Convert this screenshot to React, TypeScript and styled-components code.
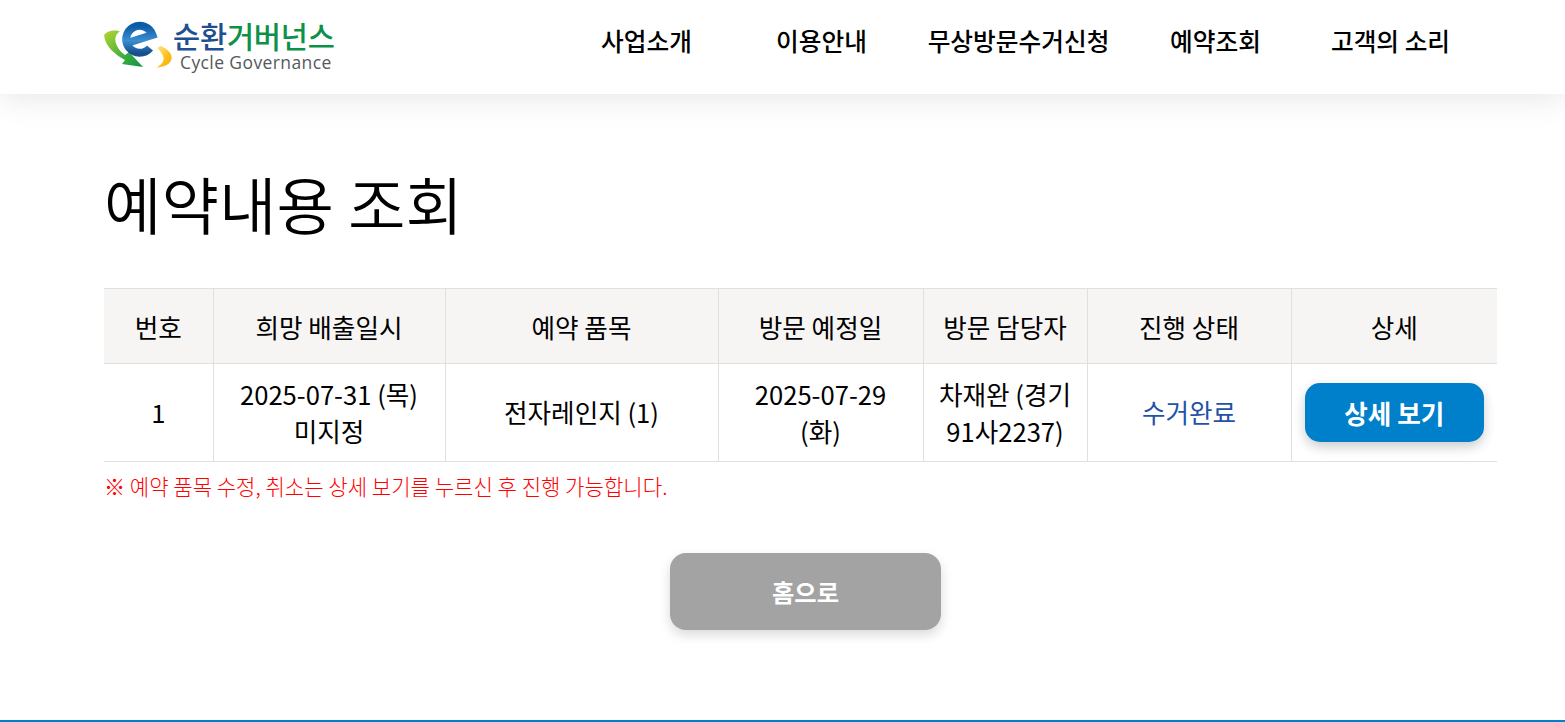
import styled, {createGlobalStyle} from "styled-components";

const navItems = ["사업소개", "이용안내", "무상방문수거신청", "예약조회", "고객의 소리"];

const columns = [109, 232, 273, 205, 164, 204, 206];
const headers = ["번호", "희망 배출일시", "예약 품목", "방문 예정일", "방문 담당자", "진행 상태", "상세"];

function LogoMark() {
    return (
        <svg width="69" height="50" viewBox="0 0 69 50" aria-hidden="true">
            <defs>
                <linearGradient id="eBlue" x1="0" y1="0" x2="0" y2="1">
                    <stop offset="0" stopColor="#0d5aa6"/>
                    <stop offset="0.55" stopColor="#3a8fd0"/>
                    <stop offset="1" stopColor="#174f90"/>
                </linearGradient>
                <linearGradient id="arrowGreen" x1="0" y1="0" x2="1" y2="1">
                    <stop offset="0" stopColor="#b9d630"/>
                    <stop offset="0.6" stopColor="#3fae3f"/>
                    <stop offset="1" stopColor="#0b9446"/>
                </linearGradient>
                <linearGradient id="arcYellow" x1="0" y1="0" x2="1" y2="1">
                    <stop offset="0" stopColor="#fbe88f"/>
                    <stop offset="0.6" stopColor="#fcbf1a"/>
                    <stop offset="1" stopColor="#f9a90f"/>
                </linearGradient>
            </defs>
            <path d="M0 15C2 12 6 10.5 10 10.5C13 10.5 15 11 16 11.5C11 14 10 20 13 26C15 30 18 33 21 35L25 32L39 47L18 44L21 40C12 35 1 27 0 15Z" fill="url(#arrowGreen)"/>
            <path d="M53.3 28L56.7 25.7C63 29 68 33 67.7 38C67 44 60 47.5 52.5 47.5C57 45 60 42 59.5 38C59 34 56 31 53.3 28Z" fill="url(#arcYellow)"/>
            <path d="M23 23L48.5 15A13.5 13.5 0 1 0 46 28" fill="none" stroke="url(#eBlue)" strokeWidth="8"/>
        </svg>
    );
}

export default function App() {
    return (
        <>
            <GlobalStyle/>
            <Header>
                <Logo>
                    <LogoMark/>
                    <LogoText>
                        <LogoName><b>순환</b>거버넌스</LogoName>
                        <LogoSub>Cycle Governance</LogoSub>
                    </LogoText>
                </Logo>
                <Nav>
                    {navItems.map(item => (
                        <NavItem key={item}>{item}</NavItem>
                    ))}
                </Nav>
            </Header>
            <Main>
                <Title>예약내용 조회</Title>
                <Table>
                    <colgroup>
                        {columns.map((width, index) => (
                            <col key={index} width={width}/>
                        ))}
                    </colgroup>
                    <thead>
                    <tr>
                        {headers.map(header => (
                            <HeadCell key={header}>{header}</HeadCell>
                        ))}
                    </tr>
                    </thead>
                    <tbody>
                    <tr>
                        <Cell>1</Cell>
                        <Cell>2025-07-31 (목)<br/>미지정</Cell>
                        <Cell>전자레인지 (1)</Cell>
                        <Cell>2025-07-29<br/>(화)</Cell>
                        <Cell>차재완 (경기<br/>91사2237)</Cell>
                        <StatusCell>수거완료</StatusCell>
                        <ActionCell><DetailButton>상세 보기</DetailButton></ActionCell>
                    </tr>
                    </tbody>
                </Table>
                <Notice>※ 예약 품목 수정, 취소는 상세 보기를 누르신 후 진행 가능합니다.</Notice>
                <Actions>
                    <HomeButton>홈으로</HomeButton>
                </Actions>
            </Main>
            <Footer/>
        </>
    );
}

const GlobalStyle = createGlobalStyle`
    html, body {
        margin: 0;
        height: 100%;
        overflow: hidden;
        background-color: white;
        font-family: "Noto Sans CJK KR", "Noto Sans", sans-serif;
        color: black;
    }
`;

const Header = styled.header`
    position: relative;
    height: 94px;
    padding: 0 87px 0 104px;
    display: flex;
    align-items: center;
    justify-content: space-between;
    box-shadow: 0 4px 30px rgba(0, 0, 0, 0.1);
`;

const Logo = styled.div`
    display: flex;
    align-items: flex-start;
    height: 94px;
    padding-top: 20px;
    box-sizing: border-box;
`;

const LogoText = styled.div`
    display: flex;
    flex-direction: column;
`;

const LogoName = styled.div`
    font-size: 29.5px;
    line-height: 32px;
    font-weight: 500;
    color: #0d9148;
    letter-spacing: -0.2px;
    margin-top: -1px;

    b {
        font-weight: 500;
        color: #1d4f91;
    }
`;

const LogoSub = styled.div`
    font-family: "Open Sans", sans-serif;
    font-size: 17.5px;
    line-height: 22px;
    color: #55595c;
    margin-left: 7px;
    letter-spacing: 0.4px;
`;

const Nav = styled.nav`
    display: grid;
    grid-template-columns: 175px 175px 219px 175px 175px;
`;

const NavItem = styled.a`
    text-align: center;
    font-size: 24.7px;
    font-weight: 500;
    line-height: 36px;
    margin-top: -15px;
`;

const Main = styled.main`
    padding: 0 68px 0 104px;
    height: 626px;
    box-sizing: border-box;
`;

const Title = styled.h1`
    margin: 0;
    padding-top: 67px;
    height: 194px;
    box-sizing: border-box;
    font-size: 62.5px;
    line-height: 84px;
    font-weight: 350;
`;

const Table = styled.table`
    width: 1393px;
    table-layout: fixed;
    border-collapse: collapse;
    font-size: 25.6px;
    line-height: 37px;
`;

const HeadCell = styled.th`
    height: 74px;
    padding: 0;
    font-weight: 400;
    background-color: #f7f5f4;
    border: 1px solid #e0e0e0;
    border-left: none;

    &:last-child {
        border-right: none;
    }

    & + & {
        border-left: 1px solid #e0e0e0;
    }
`;

const Cell = styled.td`
    height: 95px;
    padding: 0 0 2px;
    text-align: center;
    border: 1px solid #e0e0e0;
    border-left: none;

    &:last-child {
        border-right: none;
    }
`;

const StatusCell = styled(Cell)`
    color: #1f52a8;
`;

const ActionCell = styled(Cell)`
    padding: 0;
    height: 97px;
`;

const DetailButton = styled.button`
    width: 179px;
    height: 59px;
    border: none;
    border-radius: 15px;
    background-color: #0080cb;
    color: white;
    font-family: inherit;
    font-size: 25.6px;
    font-weight: 700;
    box-shadow: 0 5px 12px rgba(0, 0, 0, 0.2);
    vertical-align: middle;
`;

const Notice = styled.p`
    margin: 7px 0 0;
    font-size: 21.1px;
    line-height: 34px;
    font-weight: 300;
    color: #ff0000;
`;

const Actions = styled.div`
    display: flex;
    justify-content: center;
    padding-left: 10px;
    margin-top: 50px;
`;

const HomeButton = styled.button`
    width: 271px;
    height: 77px;
    border: none;
    border-radius: 16px;
    background-color: #a3a3a3;
    color: white;
    font-family: inherit;
    font-size: 24.3px;
    font-weight: 700;
    box-shadow: 0 5px 12px rgba(0, 0, 0, 0.15);
`;

const Footer = styled.footer`
    height: 2px;
    background-color: #0080cb;
`;
